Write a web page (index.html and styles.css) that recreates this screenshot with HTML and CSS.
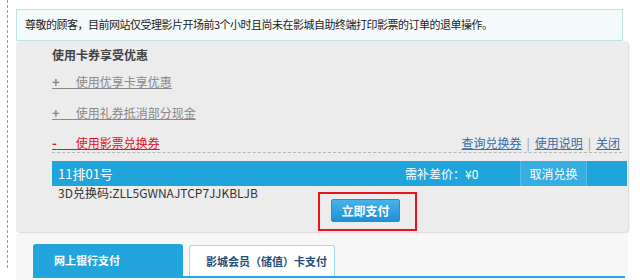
FILE: index.html
```html
<!DOCTYPE html>
<html lang="zh-cn">
<head>
    <meta charset="UTF-8">
    <title>退单与支付</title>
    <link rel="stylesheet" href="styles.css">
</head>
<body>
    <div class="page">
        <div class="rule"></div>
        <div class="content">
            <div class="notice">尊敬的顾客，目前网站仅受理影片开场前3个小时且尚未在影城自助终端打印影票的订单的退单操作。</div>

            <div class="coupon">
                <div class="coupon-title">使用卡券享受优惠</div>
                <div class="option"><a href="#" class="opt-link"><b class="sign">+</b>&nbsp;&nbsp;&nbsp;&nbsp;&nbsp;&nbsp;使用优享卡享优惠</a></div>
                <div class="option option-2"><a href="#" class="opt-link"><b class="sign">+</b>&nbsp;&nbsp;&nbsp;&nbsp;&nbsp;&nbsp;使用礼券抵消部分现金</a></div>
                <div class="option option-open">
                    <a href="#" class="opt-link opt-red"><b class="sign">-</b>&nbsp;&nbsp;&nbsp;&nbsp;&nbsp;&nbsp;&nbsp;使用影票兑换券</a>
                    <div class="tools">
                        <a href="#">查询兑换券</a><span class="sep">|</span><a href="#">使用说明</a><span class="sep">|</span><a href="#">关闭</a>
                    </div>
                </div>

                <div class="seat-bar">
                    <span class="seat">11排01号</span>
                    <span class="diff">需补差价：¥0</span>
                    <button class="cancel">取消兑换</button>
                </div>

                <div class="pay-row">
                    <div class="code">3D兑换码:ZLL5GWNAJTCP7JJKBLJB</div>
                    <div class="pay-box">
                        <button class="pay-btn">立即支付</button>
                    </div>
                </div>
            </div>

            <div class="methods">
                <div class="tabs">
                    <div class="tab tab-active">网上银行支付</div>
                    <div class="tab">影城会员（储值）卡支付</div>
                </div>
            </div>
        </div>
    </div>
</body>
</html>
```

FILE: styles.css
```css
body {
    margin: 0;
    background: #fff;
    font-family: 'Noto Sans CJK SC', 'Microsoft YaHei', sans-serif;
    font-size: 12px;
    color: #333;
}

.page {
    display: flex;
    align-items: flex-start;
}

.rule {
    width: 0;
    height: 268px;
    margin-left: 7px;
    border-left: 1px dashed #999;
}

.content {
    padding: 9px 0 0 8px;
}

.notice {
    width: 607px;
    height: 32px;
    box-sizing: border-box;
    padding-left: 8px;
    line-height: 29px;
    font-size: 11px;
    letter-spacing: -0.5px;
    background: #f5fbfb;
    border: 1px solid #bfe2e2;
    color: #222;
}

.coupon {
    width: 612px;
    height: 191px;
    box-sizing: border-box;
    padding-left: 36px;
    padding-top: 4px;
    background: #ececec;
    border-radius: 4px;
    box-shadow: 1px 1px 2px rgba(0, 0, 0, 0.18);
}

.coupon-title {
    height: 20px;
    line-height: 20px;
    font-weight: bold;
    color: #444;
}

.option {
    height: 20px;
    line-height: 20px;
    margin-top: 7px;
}

.option-2 {
    margin-top: 11px;
}

.opt-link {
    color: #888;
    text-decoration: underline;
}

.sign {
    font-size: 13px;
}

.option-open {
    display: flex;
    justify-content: space-between;
    height: 18px;
    line-height: 18px;
    margin-top: 11px;
    margin-right: 6px;
    border-bottom: 1px dashed #b5b5b5;
}

.opt-red {
    color: #e8101c;
}

.tools {
    padding-right: 2px;
}

.tools a {
    color: #3a6ca8;
    text-decoration: underline;
}

.sep {
    color: #999;
    margin: 0 5px;
}

.seat-bar {
    display: flex;
    align-items: center;
    height: 25px;
    margin-top: 8px;
    margin-right: 1px;
    padding-left: 6px;
    background: #1fa5dc;
    color: #fff;
}

.seat {
    width: 347px;
    font-size: 13px;
}

.diff {
    width: 115px;
}

.cancel {
    height: 25px;
    width: 67px;
    padding: 0;
    border: none;
    border-left: 1px solid #56bde8;
    border-right: 1px solid #56bde8;
    background: #36aee2;
    color: #fff;
    font-family: inherit;
    font-size: 12px;
}

.pay-row {
    display: flex;
    align-items: flex-start;
}

.code {
    width: 260px;
    padding-left: 6px;
    line-height: 13px;
    font-size: 12px;
    color: #333;
}

.pay-box {
    width: 99px;
    height: 39px;
    box-sizing: border-box;
    margin-top: 6px;
    padding: 5px 0 0 11px;
    border: 2px solid #e8141c;
}

.pay-btn {
    width: 69px;
    height: 23px;
    padding: 0;
    border: 1px solid #2a8ccc;
    border-radius: 2px;
    background: linear-gradient(#47b1ec, #1f91d6);
    color: #fff;
    font-family: inherit;
    font-size: 12px;
    font-weight: bold;
}

.methods {
    width: 612px;
    height: 48px;
    margin-top: 2px;
    padding: 10px 3px 0 17px;
    box-sizing: border-box;
    background: #f7f7f7;
}

.tabs {
    display: flex;
    align-items: flex-end;
    gap: 6px;
    height: 32px;
    border-bottom: 2px solid #27a6dc;
}

.tab {
    height: 31px;
    line-height: 31px;
    box-sizing: border-box;
    padding-left: 16px;
    width: 146px;
    border: 1px solid #a6d8ee;
    border-bottom: none;
    border-radius: 3px 3px 0 0;
    background: #fff;
    color: #1d4f7c;
    font-size: 11px;
    font-weight: bold;
}

.tab-active {
    width: 150px;
    height: 32px;
    padding-left: 20px;
    background: #22a5dd;
    border-color: #22a5dd;
    color: #fff;
}
```
